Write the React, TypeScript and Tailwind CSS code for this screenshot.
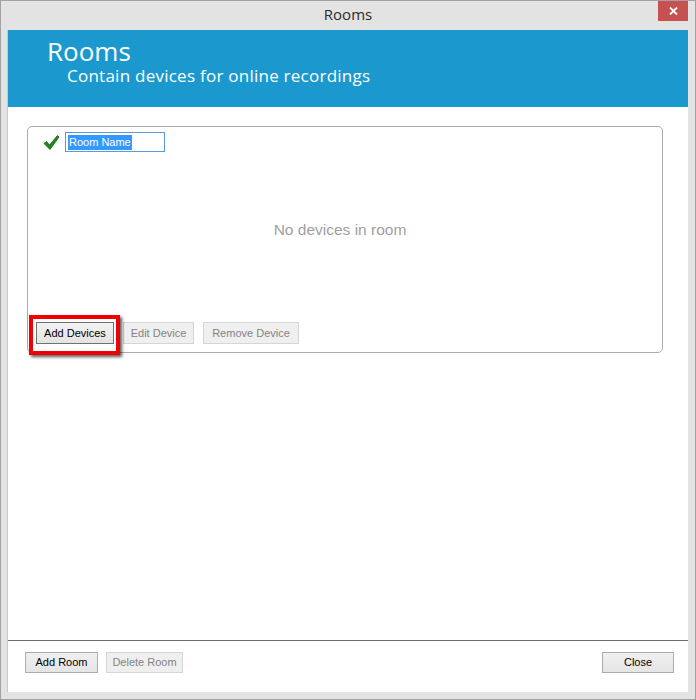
import React from 'react';

const winFont = { fontFamily: '"Open Sans", "Noto Sans", sans-serif' };
const ctlFont = { fontFamily: '"Liberation Sans", Arial, sans-serif' };

interface BtnProps {
  label: string;
  width: string;
  disabled?: boolean;
  focused?: boolean;
  height?: string;
}

const WinButton: React.FC<BtnProps> = ({ label, width, disabled, focused, height = 'h-[22px]' }) => (
  <button
    type="button"
    style={ctlFont}
    className={`${width} ${height} text-[11px] flex items-center justify-center border ${
      disabled
        ? 'border-[#d5d5d5] bg-[#efefef] text-[#838383]'
        : focused
          ? 'border-[#707070] bg-gradient-to-b from-[#f2f2f2] to-[#e3e3e3] text-black'
          : 'border-[#acacac] bg-gradient-to-b from-[#f0f0f0] to-[#e5e5e5] text-black'
    }`}
  >
    {label}
  </button>
);

const CheckMark = () => (
  <svg width="17" height="17" viewBox="0 0 17 17">
    <path
      d="M1 9.5 L3.5 7.5 L6.5 11 L14.5 1.5 L16 3 L7 15.5 Z"
      fill="#1f8a1f"
      stroke="#0f5a0f"
      strokeWidth="0.8"
      strokeLinejoin="round"
    />
  </svg>
);

const RoomPanel: React.FC = () => (
  <div className="relative ml-[19px] mt-[19px] w-[636px] h-[227px] border border-[#ababab] rounded-[5px] flex flex-col">
    <div className="flex items-center pl-[15px] pt-[5px]">
      <CheckMark />
      <div
        style={ctlFont}
        className="ml-[5px] w-[100px] h-[20px] border border-[#5a9be0] bg-white flex items-center pl-[2px]"
      >
        <span className="bg-[#3399ff] text-white text-[11px] leading-[15px] px-px">Room Name</span>
      </div>
    </div>
    <div className="flex-1 flex items-center justify-center pr-[10px] pb-[14px]">
      <span style={ctlFont} className="text-[15.5px] text-[#a0a0a0]">No devices in room</span>
    </div>
    <div className="flex gap-[9px] pl-[8px] pb-[8px]">
      <WinButton label="Add Devices" width="w-[78px]" focused />
      <WinButton label="Edit Device" width="w-[71px]" disabled />
      <WinButton label="Remove Device" width="w-[96px]" disabled />
    </div>
    <div className="absolute left-[1px] top-[188px] w-[91px] h-[40px] border-4 border-[#f00000] shadow-[2px_2px_3px_rgba(0,0,0,0.65)]" />
  </div>
);

export default function App() {
  return (
    <div className="w-[696px] h-[700px] bg-[#e3e3e3] border border-[#a2a2a2] flex flex-col" style={winFont}>
      <div className="relative h-[29px] flex items-center justify-center">
        <span className="text-[15px] text-[#2b2b2b] pb-[2px]">Rooms</span>
        <div className="absolute right-[7px] top-0 w-[30px] h-[20px] bg-[#c75050] flex items-center justify-center">
          <svg width="9" height="8" viewBox="0 0 9 8">
            <path d="M1 0.5 L8 7.5 M8 0.5 L1 7.5" stroke="white" strokeWidth="1.8" />
          </svg>
        </div>
      </div>
      <div className="ml-[6px] mr-[7px] mb-[7px] flex-1 bg-white flex flex-col border-l border-[#c9c9c9]">
        <div className="h-[77px] bg-[#1b99cf] text-white pt-[6px]">
          <div className="pl-[39px] text-[26px] leading-[30px]">Rooms</div>
          <div className="pl-[59px] text-[17px] leading-[20px] tracking-[0.25px]">Contain devices for online recordings</div>
        </div>
        <div className="flex-1">
          <RoomPanel />
        </div>
        <div className="h-[52px] border-t border-[#6d6d6d] flex items-start justify-between pt-[11px] pl-[17px] pr-[14px]">
          <div className="flex gap-[8px]">
            <WinButton label="Add Room" width="w-[73px]" height="h-[21px]" />
            <WinButton label="Delete Room" width="w-[77px]" height="h-[21px]" disabled />
          </div>
          <WinButton label="Close" width="w-[72px]" height="h-[21px]" />
        </div>
      </div>
    </div>
  );
}
